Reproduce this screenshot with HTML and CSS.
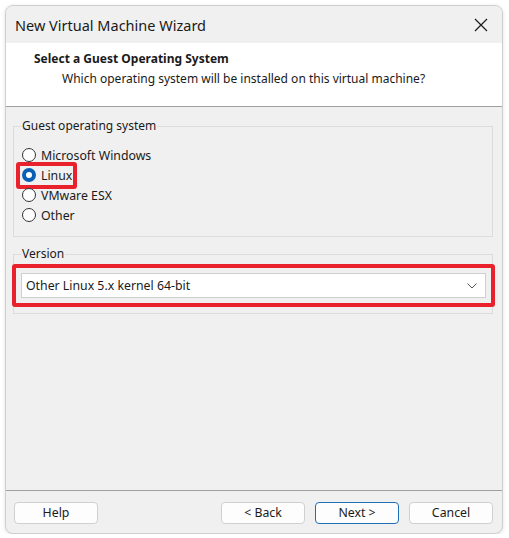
FILE: index.html
```html
<!DOCTYPE html>
<html>
<head>
<meta charset="utf-8">
<link rel="stylesheet" href="styles.css">
</head>
<body>
<div class="window">
  <div class="titlebar">
    <span class="title">New Virtual Machine Wizard</span>
    <svg class="close" width="14" height="14" viewBox="0 0 14 14"><path d="M1 1 L13 13 M13 1 L1 13" stroke="#1a1a1a" stroke-width="1.2" fill="none"/></svg>
  </div>
  <div class="header">
    <div class="h-title">Select a Guest Operating System</div>
    <div class="h-sub">Which operating system will be installed on this virtual machine?</div>
  </div>
  <div class="content">
    <fieldset class="group group-os">
      <legend>Guest operating system</legend>
      <label class="radio"><span class="dot"></span>Microsoft Windows</label>
      <label class="radio checked highlight"><span class="dot"></span>Linux</label>
      <label class="radio"><span class="dot"></span>VMware ESX</label>
      <label class="radio"><span class="dot"></span>Other</label>
    </fieldset>
    <fieldset class="group group-ver">
      <legend>Version</legend>
      <div class="redbox">
        <div class="select">
          <span>Other Linux 5.x kernel 64-bit</span>
          <svg width="10" height="6" viewBox="0 0 10 6"><path d="M0.5 0.5 L5 5 L9.5 0.5" stroke="#555" stroke-width="1" fill="none"/></svg>
        </div>
      </div>
    </fieldset>
  </div>
  <div class="footer">
    <button class="btn">Help</button>
    <div class="spacer"></div>
    <button class="btn">&lt; Back</button>
    <button class="btn primary">Next &gt;</button>
    <button class="btn">Cancel</button>
  </div>
</div>
</body>
</html>
```
FILE: styles.css
```css
html, body {
  margin: 0;
  padding: 0;
  background: #ffffff;
}
body {
  font-family: "Noto Sans", "Open Sans", sans-serif;
  font-size: 12px;
  color: #1a1a1a;
}
.window {
  margin: 5px 0 0 5px;
  width: 496px;
  height: 527px;
  border: 1px solid #cfcfcf;
  border-radius: 8px;
  overflow: hidden;
  background: #f0f0f0;
  display: flex;
  flex-direction: column;
  box-shadow: 0 1px 4px rgba(0,0,0,0.12);
}
.titlebar {
  height: 37px;
  background: #f0f0f0;
  display: flex;
  align-items: center;
  padding: 0 14px 0 9px;
  flex: none;
}
.title {
  font-size: 14.5px;
  color: #1a1a1a;
  flex: 1;
  padding-top: 1px;
}
.close {
  display: block;
}
.header {
  background: #ffffff;
  border-bottom: 1px solid #a0a0a0;
  flex: none;
  padding-left: 28px;
  box-sizing: border-box;
  height: 64px;
  padding-top: 7px;
}
.h-title {
  font-weight: bold;
  font-size: 12px;
  line-height: 18px;
}
.h-sub {
  padding-left: 28px;
  line-height: 18px;
  margin-top: 2px;
}
.content {
  flex: 1;
  padding: 11px 9px 0 7px;
  display: flex;
  flex-direction: column;
  gap: 9px;
}
.group {
  margin: 0;
  border: 1px solid #dcdcdc;
  padding: 0 0 0 8px;
  min-width: 0;
}
.group legend {
  padding: 0 1px;
  margin-left: -1px;
  line-height: 16px;
  color: #1a1a1a;
}
.group-os {
  height: 119px;
  box-sizing: border-box;
  padding-top: 11px;
}
.radio {
  display: flex;
  align-items: center;
  height: 20px;
  gap: 5px;
  position: relative;
  width: max-content;
  font-size: 12.3px;
}
.dot {
  width: 14px;
  height: 14px;
  border: 1px solid #333;
  border-radius: 50%;
  box-sizing: border-box;
  background: #fff;
  display: inline-block;
  flex: none;
}
.checked .dot {
  border: 4px solid #0a5fb4;
  background: #fff;
}
.highlight::after {
  content: "";
  position: absolute;
  left: -6px;
  top: -3px;
  right: -5px;
  bottom: -4px;
  border: 4px solid #e8212c;
  border-radius: 3px;
}
.group-ver {
  height: 68px;
  box-sizing: border-box;
  padding: 2px 0 0 8px;
}
.redbox {
  margin: 0 -3px 0 -10px;
  border: 4px solid #e8212c;
  border-radius: 3px;
  padding: 5px 5px;
  height: 43px;
  box-sizing: border-box;
}
.select {
  height: 25px;
  box-sizing: border-box;
  background: #ffffff;
  border: 1px solid #cfcfcf;
  display: flex;
  align-items: center;
  justify-content: space-between;
  padding: 0 8px 0 4px;
  font-size: 12.3px;
}
.footer {
  flex: none;
  border-top: 1px solid #a0a0a0;
  display: flex;
  align-items: center;
  gap: 10px;
  padding: 1px 9px 0 8px;
  box-sizing: border-box;
  height: 43px;
}
.spacer {
  flex: 1;
}
.btn {
  width: 84px;
  height: 22px;
  font-family: inherit;
  font-size: 12.3px;
  color: #1a1a1a;
  background: #fdfdfd;
  border: 1px solid #d0d0d0;
  border-radius: 4px;
  padding: 0;
  margin: 0;
}
.btn.primary {
  border-color: #1f6fb8;
}
```
